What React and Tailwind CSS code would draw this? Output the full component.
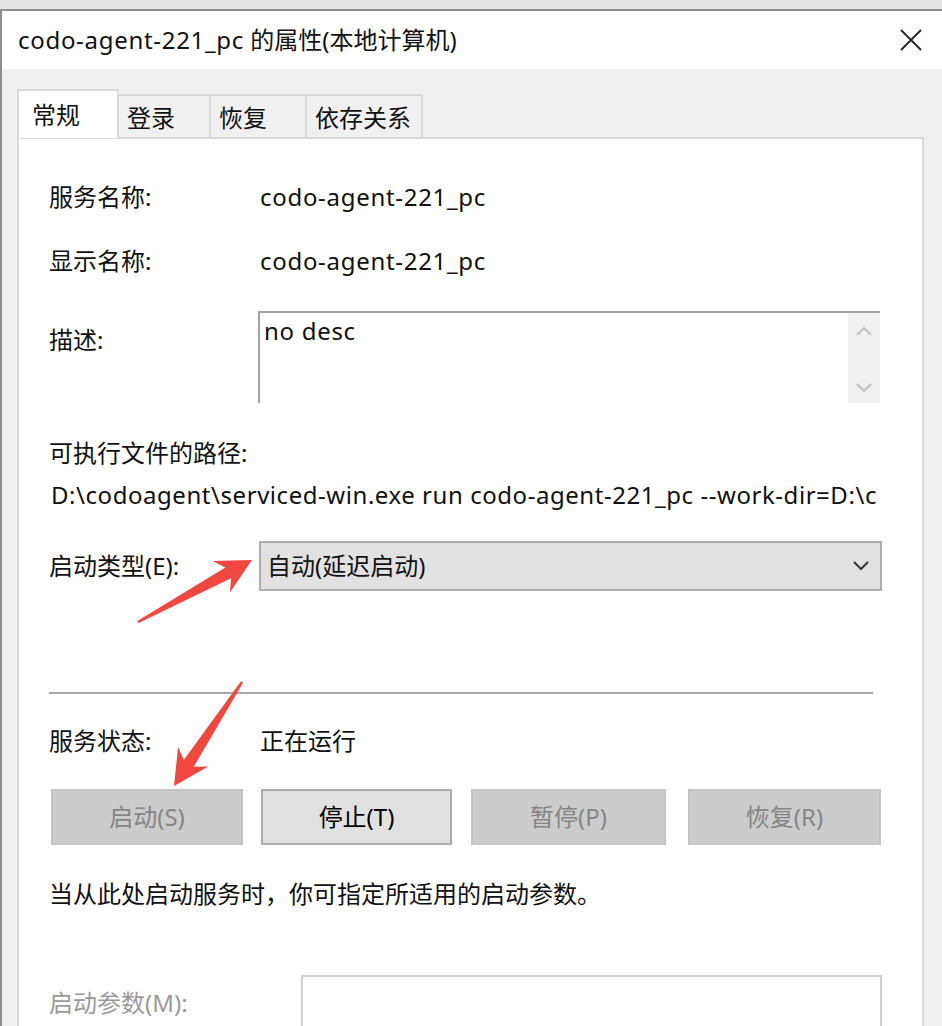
import React from "react";

function arrowPoints(tx, ty, px, py) {
  const dx = px - tx;
  const dy = py - ty;
  const len = Math.hypot(dx, dy);
  const ux = dx / len;
  const uy = dy / len;
  const nx = -uy;
  const ny = ux;
  const at = (d, w) => [px - ux * d + nx * w, py - uy * d + ny * w];
  return [at(len, 1.2), at(27, 6), at(35, 18), [px, py], at(35, -18), at(27, -6), at(len, -1.2)]
    .map((p) => p.map((v) => v.toFixed(1)).join(","))
    .join(" ");
}

function Chevron({ up, className }) {
  return (
    <svg width="18" height="10" viewBox="0 0 18 10" className={className}>
      <path
        d={up ? "M2 9 L9 2 L16 9" : "M2 1 L9 8 L16 1"}
        fill="none"
        stroke="currentColor"
        strokeWidth="2"
      />
    </svg>
  );
}

// latin runs are a little wider in the original
function L({ children, className = "tracking-[0.7px]" }) {
  return <span className={className}>{children}</span>;
}

function Field({ label, value }) {
  return (
    <div className="flex items-center h-[40px]">
      <span className="w-[241px] pl-[30px]">{label}</span>
      <L>{value}</L>
    </div>
  );
}

function Btn({ children, disabled, className }) {
  return (
    <div
      className={
        "h-[56px] flex items-center justify-center border-2 " +
        (disabled
          ? "bg-[#cccccc] border-[#c4c4c4] text-[#858585] "
          : "bg-[#e1e1e1] border-[#adadad] text-black ") +
        className
      }
    >
      {children}
    </div>
  );
}

export default function App() {
  const tabs = [
    { name: "登录", w: "w-[92px]" },
    { name: "恢复", w: "w-[96px]" },
    { name: "依存关系", w: "w-[116px]" },
  ];

  return (
    <div className="relative w-[942px] h-[1026px] overflow-hidden bg-[#f0f0f0] text-[24px] leading-[30px] text-[#111] font-['Noto_Sans','Noto_Sans_CJK_SC',sans-serif]">
      <div className="h-[11px] bg-[#e4e4e4] border-b-2 border-[#8f8f8f]" />
      <div className="flex flex-col border-l-2 border-[#8f8f8f] h-full">
        {/* title bar */}
        <div className="h-[59px] bg-white flex items-center justify-between pl-[16px] pr-[20px]">
          <span>
            <L>codo-agent-221_pc</L> 的属性(本地计算机)
          </span>
          <svg width="22" height="22" viewBox="0 0 22 22">
            <path d="M1 1 L21 21 M21 1 L1 21" stroke="#222" strokeWidth="1.8" />
          </svg>
        </div>

        <div className="flex-1 pt-[19px] pl-[15px] pr-[18px]">
          {/* tabs */}
          <div className="flex items-end h-[49px]">
            <div className="w-[102px] h-[49px] bg-white border-2 border-b-0 border-[#d9d9d9] pl-[13px] flex items-center relative z-10 -mb-[1px]">
              常规
            </div>
            {tabs.map((t) => (
              <div
                key={t.name}
                className={t.w + " h-[43px] border-2 border-l-0 border-b-0 border-[#dadada] pl-[8px] flex items-center pt-[2px]"}
              >
                {t.name}
              </div>
            ))}
          </div>

          {/* panel */}
          <div className="bg-white border-2 border-[#d9d9d9] h-[900px] pt-[38px]">
            <Field label="服务名称:" value="codo-agent-221_pc" />
            <div className="mt-[24px]">
              <Field label="显示名称:" value="codo-agent-221_pc" />
            </div>

            <div className="flex mt-[30px]">
              <span className="w-[239px] pl-[30px] pt-[14px]">描述:</span>
              <div className="w-[622px] h-[92px] border-t-2 border-l-2 border-[#a3a3a3] flex">
                <div className="flex-1 pl-[4px] pt-[3px]">
                  <L>no desc</L>
                </div>
                <div className="w-[32px] bg-[#f0f0f0] flex flex-col items-center justify-between pt-[13px] pb-[10px] text-[#c2c2c2]">
                  <Chevron up />
                  <Chevron />
                </div>
              </div>
            </div>

            <div className="pl-[30px] mt-[35px]">可执行文件的路径:</div>
            <div className="pl-[32px] mt-[12px] whitespace-nowrap">
              <L className="tracking-[0.55px]">D:\codoagent\serviced-win.exe run codo-agent-221_pc --work-dir=D:\c</L>
            </div>

            <div className="flex items-center mt-[31px]">
              <span className="w-[240px] pl-[30px]">启动类型(E):</span>
              <div className="w-[623px] h-[50px] bg-[#e1e1e1] border-2 border-[#adadad] flex items-center justify-between pl-[6px] pr-[10px]">
                <span>自动(延迟启动)</span>
                <Chevron className="text-[#333]" />
              </div>
            </div>

            <div className="ml-[30px] mt-[101px] w-[824px] h-[2px] bg-[#a6a6a6]" />

            <div className="flex items-center mt-[32px]">
              <span className="w-[241px] pl-[30px]">服务状态:</span>
              <span>正在运行</span>
            </div>

            <div className="flex mt-[33px] pl-[32px]">
              <Btn disabled className="w-[192px]">启动(S)</Btn>
              <Btn className="w-[191px] ml-[18px]">停止(T)</Btn>
              <Btn disabled className="w-[195px] ml-[19px]">暂停(P)</Btn>
              <Btn disabled className="w-[193px] ml-[22px]">恢复(R)</Btn>
            </div>

            <div className="pl-[30px] mt-[34px]">当从此处启动服务时，你可指定所适用的启动参数。</div>

            <div className="flex mt-[66px]">
              <span className="w-[282px] pl-[30px] pt-[13px] text-[#9a9a9a]">启动参数(M):</span>
              <div className="w-[581px] h-[80px] border-2 border-[#d0d0d0] bg-white" />
            </div>
          </div>
        </div>
      </div>

      {/* annotation arrows */}
      <svg className="absolute inset-0 pointer-events-none" width="942" height="1026">
        <polygon points={arrowPoints(138, 622, 252, 560)} fill="#f2473f" />
        <polygon points={arrowPoints(242, 682, 174, 786)} fill="#f2473f" />
      </svg>
    </div>
  );
}
